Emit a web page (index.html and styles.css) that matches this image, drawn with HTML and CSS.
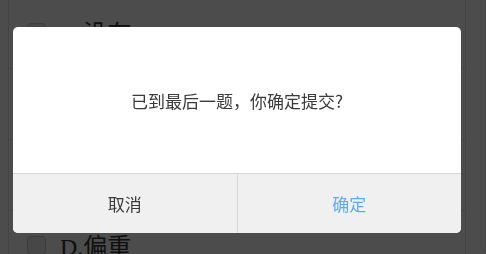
FILE: index.html
```html
<!DOCTYPE html>
<html lang="zh-CN">
<head>
<meta charset="utf-8">
<title>确认提交</title>
<link rel="stylesheet" href="styles.css">
</head>
<body>
<div class="page">
  <ul class="options">
    <li class="option"><span class="check"></span><span class="label">A.没有</span></li>
    <li class="option"><span class="check"></span><span class="label">B.偏轻</span></li>
    <li class="option"><span class="check"></span><span class="label">C.正常</span></li>
    <li class="option"><span class="check"></span><span class="label">D.偏重</span></li>
  </ul>
</div>
<div class="overlay">
  <div class="dialog">
    <div class="dialog-body">已到最后一题，你确定提交?</div>
    <div class="dialog-footer">
      <button class="btn btn-cancel">取消</button>
      <button class="btn btn-ok">确定</button>
    </div>
  </div>
</div>
</body>
</html>
```
FILE: styles.css
```css
html, body {
  margin: 0;
  padding: 0;
  background: #ffffff;
  height: 100%;
  overflow: hidden;
}
.page {
  width: 485px;
  height: 100%;
  border-right: 1px solid #e4e4e4;
}
.options {
  list-style: none;
  margin: -2px 0 0 8px;
  padding: 0;
  width: 456px;
  border-left: 1px solid #e4e4e4;
  border-right: 1px solid #e4e4e4;
}
.option {
  height: 45px;
  border-bottom: 1px solid #e4e4e4;
  display: flex;
  align-items: flex-start;
  padding: 25px 0 0 18px;
  gap: 14px;
}
.check {
  width: 17px;
  height: 17px;
  border: 1px solid #c8c8c8;
  border-radius: 4px;
  background: #eeeeee;
  flex: none;
}
.label {
  font-family: "Liberation Serif", "Noto Sans CJK SC", serif;
  font-size: 24px;
  line-height: 22px;
  color: #333333;
}
.overlay {
  position: fixed;
  inset: 0;
  background: rgba(0, 0, 0, 0.7);
  display: flex;
  align-items: flex-start;
  padding: 27px 0 0 13px;
}
.dialog {
  width: 448px;
  height: 206px;
  background: #ffffff;
  border-radius: 5px;
  overflow: hidden;
  display: flex;
  flex-direction: column;
  font-family: "Noto Sans CJK SC", "Noto Sans", sans-serif;
}
.dialog-body {
  height: 146px;
  display: flex;
  align-items: center;
  justify-content: center;
  font-size: 17px;
  color: #3a3a3a;
  border-bottom: 1px solid #d6d6d6;
}
.dialog-footer {
  flex: 1;
  display: flex;
  background: #f0f0f0;
}
.btn {
  flex: 1;
  border: 0;
  margin: 0;
  padding: 0;
  background: transparent;
  font-family: inherit;
  font-size: 17px;
  color: #3a3a3a;
}
.btn-cancel {
  border-right: 1px solid #d6d6d6;
}
.btn-ok {
  color: #5eabf0;
}
```
